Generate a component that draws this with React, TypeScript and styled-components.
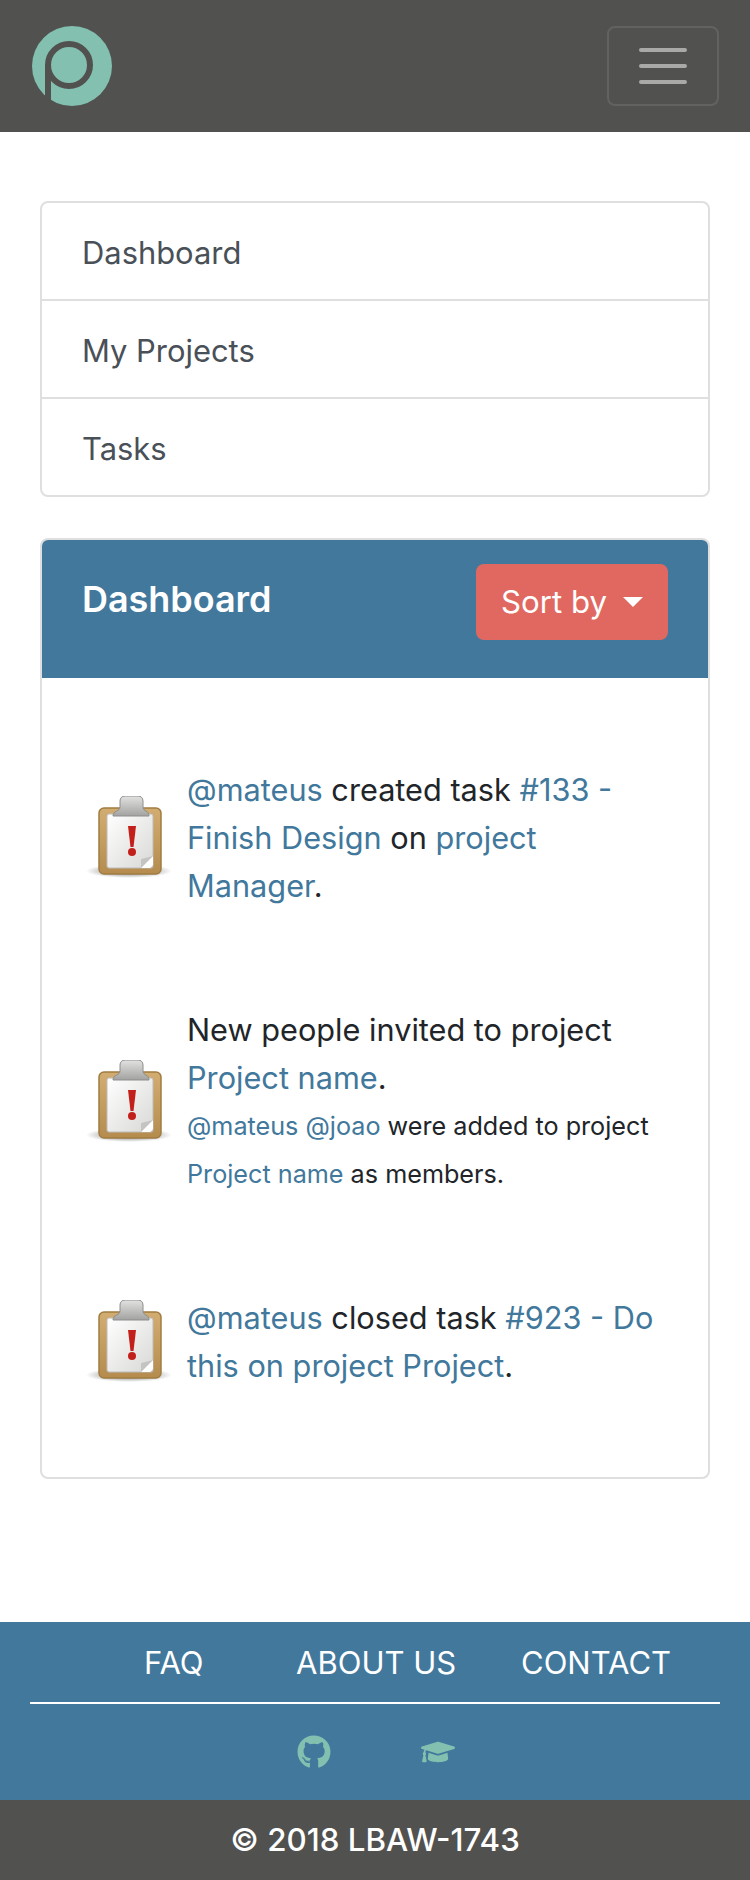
import React from "react";
import styled, { createGlobalStyle } from "styled-components";
import { FaGithub, FaGraduationCap } from "react-icons/fa";

const GlobalStyle = createGlobalStyle`
  html, body {
    margin: 0;
    padding: 0;
    background: #fff;
    font-family: Inter, "Liberation Sans", Arial, sans-serif;
  }
  * { box-sizing: border-box; }
`;

const Page = styled.div`
  width: 750px;
  height: 1880px;
  display: flex;
  flex-direction: column;
`;

const Navbar = styled.header`
  height: 132px;
  background: #51514f;
  padding: 26px 32px;
  display: flex;
  justify-content: space-between;
  align-items: flex-start;
`;

const Toggler = styled.button`
  width: 112px;
  height: 80px;
  margin-right: -1px;
  background: transparent;
  border: 2px solid #626260;
  border-radius: 8px;
  display: flex;
  flex-direction: column;
  align-items: center;
  justify-content: center;
  gap: 12px;
  padding: 0;
`;

const TogglerBar = styled.span`
  width: 48px;
  height: 4px;
  border-radius: 2px;
  background: #a9a9a8;
`;

const Main = styled.main`
  flex: 1;
  padding: 69px 40px 0;
  display: flex;
  flex-direction: column;
  gap: 41px;
`;

const Menu = styled.nav`
  height: 296px;
  border: 2px solid #dfdfdf;
  border-radius: 8px;
  display: flex;
  flex-direction: column;
`;

const MenuItem = styled.a`
  flex: 1;
  padding: 3px 40px 0;
  display: flex;
  align-items: center;
  font-size: 30.9px;
  color: #495057;
  & + & {
    border-top: 2px solid #dfdfdf;
  }
`;

const Card = styled.section`
  height: 941px;
  border: 2px solid #dfdfdf;
  border-radius: 8px;
  overflow: hidden;
`;

const CardHeader = styled.div`
  height: 138px;
  background: #41789c;
  padding: 24px 40px 0;
  display: flex;
  justify-content: space-between;
  align-items: flex-start;
`;

const CardTitle = styled.h2`
  margin: 15px 0 0;
  font-size: 36px;
  line-height: 40px;
  font-weight: 600;
  letter-spacing: -0.05px;
  color: #fff;
`;

const SortButton = styled.button`
  width: 192px;
  height: 76px;
  border: none;
  border-radius: 8px;
  background: #e16860;
  color: #fff;
  font-family: inherit;
  font-size: 31.2px;
  display: flex;
  align-items: center;
  justify-content: center;
  gap: 16px;
  padding: 0;
`;

const Caret = styled.span`
  width: 0;
  height: 0;
  border-left: 10px solid transparent;
  border-right: 10px solid transparent;
  border-top: 10px solid #fff;
`;

const Feed = styled.div`
  padding: 0 38px 0 44px;
`;

const FeedItem = styled.div<{ $top: number }>`
  margin-top: ${({ $top }) => $top}px;
  display: flex;
  align-items: center;
  gap: 13px;
`;

const ItemIcon = styled.svg`
  flex: none;
`;

const FeedText = styled.div`
  flex: 1;
  font-size: 30.7px;
  line-height: 48px;
  color: #212529;
`;

const FeedLink = styled.a`
  color: #41789c;
`;

const FeedNote = styled.div`
  font-size: 25.2px;
`;

const Footer = styled.footer`
  height: 178px;
  background: #41789c;
  padding: 0 30px;
`;

const FooterLinks = styled.div`
  height: 82px;
  border-bottom: 2px solid #fff;
  display: flex;
  align-items: center;
  padding-left: 114px;
`;

const FooterLink = styled.a<{ $width: number }>`
  width: ${({ $width }) => $width}px;
  font-size: 31px;
  color: #fff;
`;

const FooterIcons = styled.div`
  height: 96px;
  display: flex;
  align-items: center;
  padding-left: 267px;
  gap: 90px;
  color: #83c0b0;
  font-size: 34px;
`;

const Copyright = styled.div`
  height: 80px;
  background: #51514f;
  color: #fff;
  font-size: 31.3px;
  font-weight: 500;
  display: flex;
  align-items: center;
  justify-content: center;
`;

const Logo = () => (
  <svg width="80" height="80" viewBox="0 0 80 80">
    <circle cx="40" cy="40" r="40" fill="#83c0b0" />
    <circle cx="37" cy="39" r="21" fill="none" stroke="#51514f" strokeWidth="6" />
    <path d="M13 39H19V78L13 70Z" fill="#51514f" />
  </svg>
);

const Clipboard = () => (
  <ItemIcon width="88" height="84" viewBox="0 0 88 84">
    <defs>
      <linearGradient id="paper" x1="0" y1="0" x2="1" y2="1">
        <stop offset="0" stopColor="#ffffff" />
        <stop offset="1" stopColor="#d8d8d6" />
      </linearGradient>
      <linearGradient id="clip" x1="0" y1="0" x2="0" y2="1">
        <stop offset="0" stopColor="#e2e2e0" />
        <stop offset="1" stopColor="#a2a2a0" />
      </linearGradient>
      <linearGradient id="board" x1="0" y1="0" x2="0" y2="1">
        <stop offset="0" stopColor="#d2ad72" />
        <stop offset="1" stopColor="#b58c4e" />
      </linearGradient>
      <radialGradient id="shadow">
        <stop offset="0" stopColor="#000" stopOpacity="0.6" />
        <stop offset="1" stopColor="#000" stopOpacity="0" />
      </radialGradient>
    </defs>
    <ellipse cx="43" cy="75" rx="43" ry="7" fill="url(#shadow)" />
    <rect x="13" y="12" width="62" height="66" rx="5" fill="url(#board)" stroke="#a07c42" strokeWidth="1.5" />
    <rect x="21" y="18" width="46" height="54" rx="2" fill="url(#paper)" stroke="#bcbcba" />
    <path d="M55 72L67 60V69L64 72Z" fill="#fff" />
    <path d="M55 72V63L67 60Z" fill="#c4c4c2" />
    <path d="M27 20C27 14 34 16 34 11V5C34 2 36 0 39 0H52C55 0 57 2 57 5V11C57 16 63 14 63 20Z" fill="url(#clip)" stroke="#8e8e8c" />
    <path d="M42 30H50L47.500 51H44.500Z" fill="#c3201c" />
    <circle cx="46" cy="56" r="4" fill="#c3201c" />
  </ItemIcon>
);

export default function App() {
  return (
    <Page>
      <GlobalStyle />
      <Navbar>
        <Logo />
        <Toggler aria-label="Toggle navigation">
          <TogglerBar />
          <TogglerBar />
          <TogglerBar />
        </Toggler>
      </Navbar>
      <Main>
        <Menu>
          <MenuItem>Dashboard</MenuItem>
          <MenuItem>My Projects</MenuItem>
          <MenuItem>Tasks</MenuItem>
        </Menu>
        <Card>
          <CardHeader>
            <CardTitle>Dashboard</CardTitle>
            <SortButton>
              Sort by
              <Caret />
            </SortButton>
          </CardHeader>
          <Feed>
            <FeedItem $top={88}>
              <Clipboard />
              <FeedText>
                <FeedLink>@mateus</FeedLink> created task <FeedLink>#133 - Finish Design</FeedLink> on{" "}
                <FeedLink>project Manager</FeedLink>.
              </FeedText>
            </FeedItem>
            <FeedItem $top={96}>
              <Clipboard />
              <FeedText>
                New people invited to project <FeedLink>Project name</FeedLink>.
                <FeedNote>
                  <FeedLink>@mateus @joao</FeedLink> were added to project <FeedLink>Project name</FeedLink> as
                  members.
                </FeedNote>
              </FeedText>
            </FeedItem>
            <FeedItem $top={96}>
              <Clipboard />
              <FeedText>
                <FeedLink>@mateus</FeedLink> closed task <FeedLink>#923 - Do this on project Project</FeedLink>.
              </FeedText>
            </FeedItem>
          </Feed>
        </Card>
      </Main>
      <Footer>
        <FooterLinks>
          <FooterLink $width={152}>FAQ</FooterLink>
          <FooterLink $width={225}>ABOUT US</FooterLink>
          <FooterLink $width={150}>CONTACT</FooterLink>
        </FooterLinks>
        <FooterIcons>
          <FaGithub />
          <FaGraduationCap />
        </FooterIcons>
      </Footer>
      <Copyright>© 2018 LBAW-1743</Copyright>
    </Page>
  );
}
